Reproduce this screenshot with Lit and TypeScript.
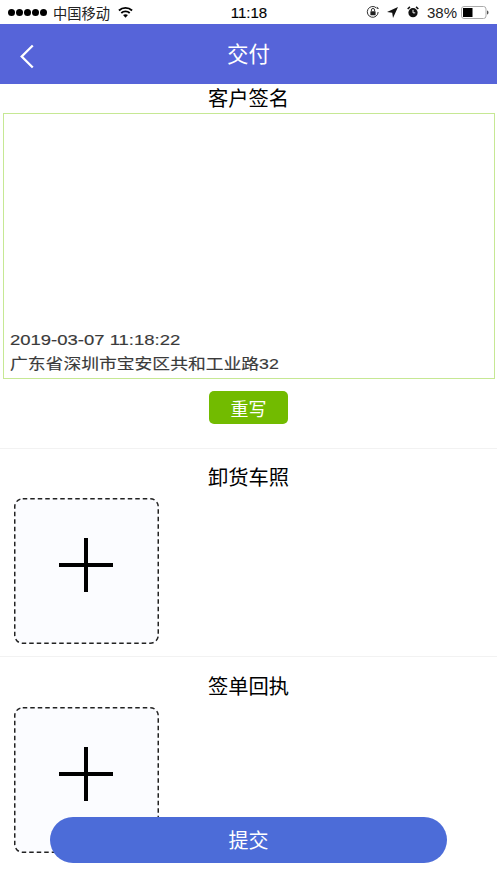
import { LitElement, html, css, svg } from "lit";
import { customElement } from "lit/decorators.js";

const plus = svg`<svg class="plus" width="54" height="54" viewBox="0 0 54 54"><path d="M0 27H54M27 0V54" stroke="#000" stroke-width="4" fill="none"/></svg>`;
const dash = svg`<svg class="dash" width="145" height="146" viewBox="0 0 145 146"><rect x=".75" y=".75" width="143.5" height="144.5" rx="8" fill="none" stroke="#222" stroke-width="1.5" stroke-dasharray="4.5 3"/></svg>`;

@customElement("app-root")
export class AppRoot extends LitElement {
  static styles = css`
    :host { display: block; width: 497px; height: 883px; position: relative; overflow: hidden; background: #fff;
      font-family: "Liberation Sans", "Noto Sans CJK SC", sans-serif; color: #000; }
    .status { height: 24px; display: grid; grid-template-columns: 1fr auto 1fr; align-items: center; font-size: 14px; }
    .st-left { display: flex; align-items: center; padding-left: 8px; gap: 6px; }
    .dots { display: flex; gap: 1px; }
    .dots i { width: 7px; height: 7px; border-radius: 50%; background: #000; display: block; }
    .carrier { font-size: 14.25px; color: #222; }
    .wifi { display: block; margin-left: 2px; }
    .time { font-size: 15px; -webkit-text-stroke: 0.15px #000; padding-left: 1px; }
    .st-right { display: flex; align-items: center; justify-content: flex-end; padding-right: 8px; }
    .st-right svg { display: block; }
    .lock { margin-right: 7px; }
    .arrow { margin-right: 9px; }
    .pct { font-size: 15px; color: #222; margin: 0 4px 0 8px; }
    .header { height: 60px; background: #5664d9; color: #fff; display: flex; align-items: center; justify-content: center; position: relative; font-size: 21.5px; padding-bottom: 3px; box-sizing: border-box; }
    .back { position: absolute; left: 19px; top: 20px; }
    .sec-title { text-align: center; font-size: 20.3px; line-height: 30px; }
    .sign-wrap { padding: 0 2px 0 3px; }
    .sign-title { line-height: 28px; padding-top: 1px; height: 29px; box-sizing: border-box; }
    .sign { height: 266px; box-sizing: border-box; border: 1px solid #c6e894; display: flex; flex-direction: column; justify-content: flex-end; padding: 0 0 1px 6px; overflow: hidden; }
    .sign div { transform: scaleX(1.32); transform-origin: left center; color: #3a3a3a; font-size: 14px; line-height: 24px; white-space: nowrap; -webkit-text-stroke: 0.15px #3a3a3a; }
    .sign .addr { font-size: 14.9px; line-height: 25px; transform: scaleX(1.195); }
    .redo-row { display: flex; justify-content: center; padding: 12px 0 24px; }
    .redo { width: 79px; height: 33px; border-radius: 5px; background: #72bb00; color: #fff; display: flex; align-items: center; justify-content: center; font-size: 18px; }
    .divider { height: 1px; background: #f2f2f2; }
    .section { padding: 15px 0 12px; height: 207px; box-sizing: border-box; }
    .section.last { padding-top: 16px; }
    .section .sec-title { line-height: 28px; }
    .up { position: relative; margin: 6px 0 0 14px; width: 145px; height: 146px; border-radius: 8px; background: #fbfcff; display: flex; align-items: center; justify-content: center; }
    .dash { position: absolute; inset: 0; display: block; }
    .plus { display: block; margin: -12px 0 0 -1px; }
    .submit { position: absolute; left: 50px; top: 817px; width: 397px; height: 46px; border-radius: 23px; background: #4c6cd8; color: #fff; display: flex; align-items: center; justify-content: center; font-size: 20px; padding-bottom: 2px; box-sizing: border-box; }
  `;

  render() {
    return html`
      <div class="status">
        <div class="st-left">
          <div class="dots"><i></i><i></i><i></i><i></i><i></i></div>
          <span class="carrier">中国移动</span>
          <svg class="wifi" width="15" height="12" viewBox="0 0 16 12"><path d="M1 4.4C5 .6 11 .6 15 4.4" stroke="#000" stroke-width="2" fill="none"/><path d="M3.5 7C6 4.7 10 4.7 12.5 7" stroke="#000" stroke-width="2" fill="none"/><path d="M8 12 5.4 9.2C7 8 9 8 10.6 9.2Z" fill="#000"/></svg>
        </div>
        <div class="time">11:18</div>
        <div class="st-right">
          <svg class="lock" width="14" height="14" viewBox="0 0 15 15"><path d="M13 7.5A5.8 5.8 0 1 1 11 3" stroke="#222" stroke-width="1" fill="none"/><path d="M11.5 1.5V4H14" fill="#222"/><rect x="4.7" y="6.6" width="5.6" height="4.4" rx=".6" fill="#222"/><path d="M5.8 6.6V5.4a1.7 1.7 0 0 1 3.4 0V6.6" stroke="#222" stroke-width="1" fill="none"/></svg>
          <svg class="arrow" width="11" height="11" viewBox="0 0 11 11"><path d="M11 0 0 5 5.2 5.8 6 11Z" fill="#111"/></svg>
          <svg width="12" height="12" viewBox="0 0 14 14"><circle cx="7" cy="7.8" r="5.4" fill="#111"/><path d="M7 4.5V8H9.6" stroke="#fff" stroke-width="1.1" fill="none"/><path d="M.8 3.5 3.4 1M13.2 3.5 10.6 1" stroke="#111" stroke-width="1.8"/></svg>
          <span class="pct">38%</span>
          <svg width="28" height="13" viewBox="0 0 28 13"><rect x=".5" y=".5" width="24.5" height="12" rx="2.5" fill="#fff" stroke="#aaa"/><rect x="2" y="2" width="9.5" height="9" fill="#000"/><path d="M26 4.5c1 .3 1.5 1 1.5 2s-.5 1.7-1.5 2Z" fill="#555"/></svg>
        </div>
      </div>
      <div class="header">
        <svg class="back" width="16" height="25" viewBox="0 0 16 26"><path d="M14 1.5 2.5 13 14 24.5" stroke="#fff" stroke-width="2.4" fill="none"/></svg>
        交付
      </div>
      <div class="sec-title sign-title">客户签名</div>
      <div class="sign-wrap">
        <div class="sign">
          <div>2019-03-07 11:18:22</div>
          <div class="addr">广东省深圳市宝安区共和工业路32</div>
        </div>
      </div>
      <div class="redo-row"><div class="redo">重写</div></div>
      <div class="divider"></div>
      <div class="section">
        <div class="sec-title">卸货车照</div>
        <div class="up">${dash}${plus}</div>
      </div>
      <div class="divider"></div>
      <div class="section last">
        <div class="sec-title">签单回执</div>
        <div class="up">${dash}${plus}</div>
      </div>
      <div class="submit">提交</div>
    `;
  }
}
